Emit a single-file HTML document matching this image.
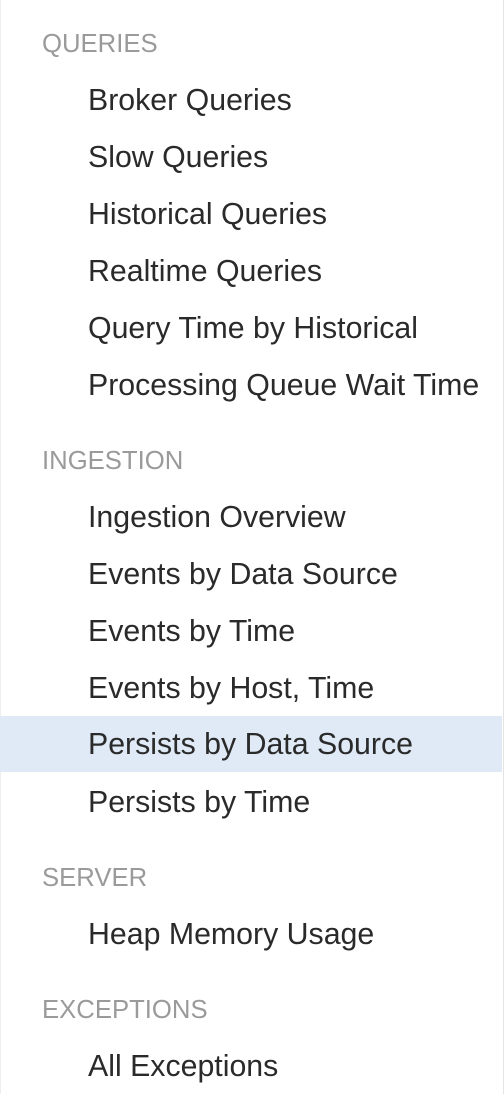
<!DOCTYPE html>
<html><head><style>
body{margin:0;width:504px;height:1094px;background:#fff;font-family:"Liberation Sans",sans-serif;position:relative;overflow:hidden}
.b{position:absolute;left:0;top:0;width:502px;height:1094px;border-right:2px solid #e4e4e4;border-left:1px solid #eee}
.h,.i{position:absolute;left:0;width:502px;height:56px;line-height:58px;white-space:nowrap}
.h{padding-left:42px;color:#9a9a9a;font-size:25.7px}
.i{padding-left:88px;color:#2a2a2a;font-size:30.3px;box-sizing:border-box}
.s{background:#dfeaf6}
</style></head><body>
<div class="b"></div>
<div class="h" style="top:15px">QUERIES</div>
<div class="i" style="top:72px">Broker Queries</div>
<div class="i" style="top:129px">Slow Queries</div>
<div class="i" style="top:186px">Historical Queries</div>
<div class="i" style="top:243px">Realtime Queries</div>
<div class="i" style="top:300px">Query Time by Historical</div>
<div class="i" style="top:357px">Processing Queue Wait Time</div>
<div class="h" style="top:432px">INGESTION</div>
<div class="i" style="top:489px">Ingestion Overview</div>
<div class="i" style="top:546px">Events by Data Source</div>
<div class="i" style="top:603px">Events by Time</div>
<div class="i" style="top:660px">Events by Host, Time</div>
<div class="i s" style="top:716px">Persists by Data Source</div>
<div class="i" style="top:774px">Persists by Time</div>
<div class="h" style="top:849px">SERVER</div>
<div class="i" style="top:906px">Heap Memory Usage</div>
<div class="h" style="top:981px">EXCEPTIONS</div>
<div class="i" style="top:1038px">All Exceptions</div>
</body></html>
